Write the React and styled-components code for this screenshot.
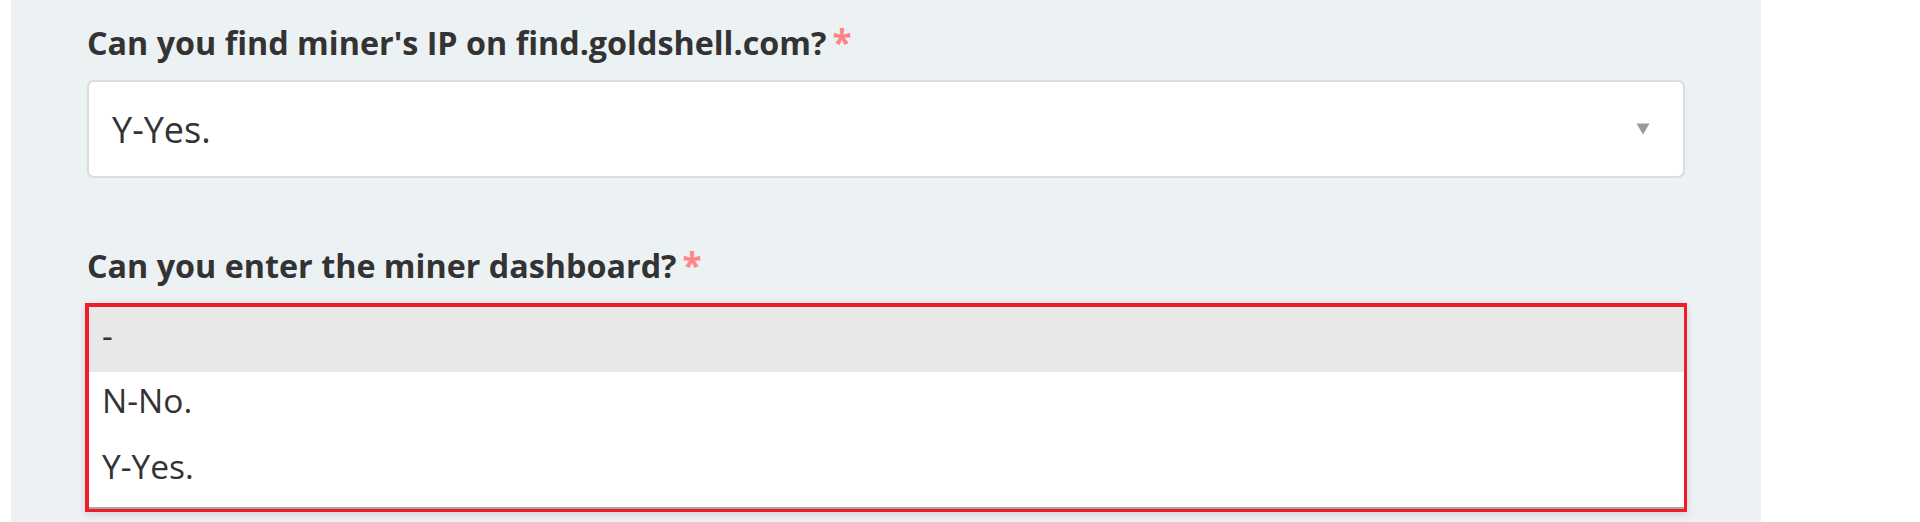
import React from 'react';
import styled, { createGlobalStyle } from 'styled-components';

const GlobalStyle = createGlobalStyle`
  html, body {
    margin: 0;
    padding: 0;
    background: #fff;
    font-family: "Open Sans", "Liberation Sans", sans-serif;
  }
`;

const Page = styled.div`
  padding-left: 11px;
  height: 522px;
  overflow: hidden;
`;

const Panel = styled.div`
  width: 1750px;
  height: 522px;
  box-sizing: border-box;
  background: #ecf1f4;
  padding: 22px 76px 0;
`;

const Field = styled.div`
  margin-bottom: 67px;
`;

const Label = styled.div`
  font-size: 32.3px;
  line-height: 40px;
  font-weight: 700;
  color: #333;
  margin-bottom: 18px;
`;

const Required = styled.span`
  color: #ff8585;
  font-size: 35px;
  font-weight: 700;
  margin-left: 6px;
`;

const Select = styled.div`
  height: 98px;
  box-sizing: border-box;
  border: 2px solid #dcdcdc;
  border-radius: 7px;
  background: #fff;
  display: flex;
  align-items: center;
  justify-content: space-between;
  padding: 0 33px 0 23px;
  font-size: 36px;
  color: #333;
`;

const Listbox = styled.div`
  margin: 0 -2px 0 -2px;
  border-style: solid;
  border-color: #ee1d2a;
  border-width: 4px 3px 3px 4px;
  background: #fff;
  box-shadow: 0 2px 8px rgba(0, 0, 0, 0.12);
`;

const Options = styled.div`
  padding-bottom: 3px;
  border-bottom: 2px solid #a6a6a6;
`;

const Option = styled.div`
  height: 66px;
  box-sizing: border-box;
  padding: 0 0 10px 13px;
  line-height: 56px;
  font-size: 33.5px;
  color: #333;
  background: ${(p) => (p.selected ? '#e8e8e8' : '#fff')};
  &:first-child {
    height: 65px;
  }
`;

const Caret = () => (
  <svg width="14" height="12" viewBox="0 0 14 12">
    <path d="M0.5 0.5 L13.5 0.5 L7 11.5 Z" fill="#999" />
  </svg>
);

export default function App() {
  return (
    <Page>
      <GlobalStyle />
      <Panel>
        <Field>
          <Label>
            Can you find miner's IP on find.goldshell.com?<Required>*</Required>
          </Label>
          <Select>
            <span>Y-Yes.</span>
            <Caret />
          </Select>
        </Field>
        <Field>
          <Label>
            Can you enter the miner dashboard?<Required>*</Required>
          </Label>
          <Listbox>
            <Options>
              <Option selected>-</Option>
              <Option>N-No.</Option>
              <Option>Y-Yes.</Option>
            </Options>
          </Listbox>
        </Field>
      </Panel>
    </Page>
  );
}
